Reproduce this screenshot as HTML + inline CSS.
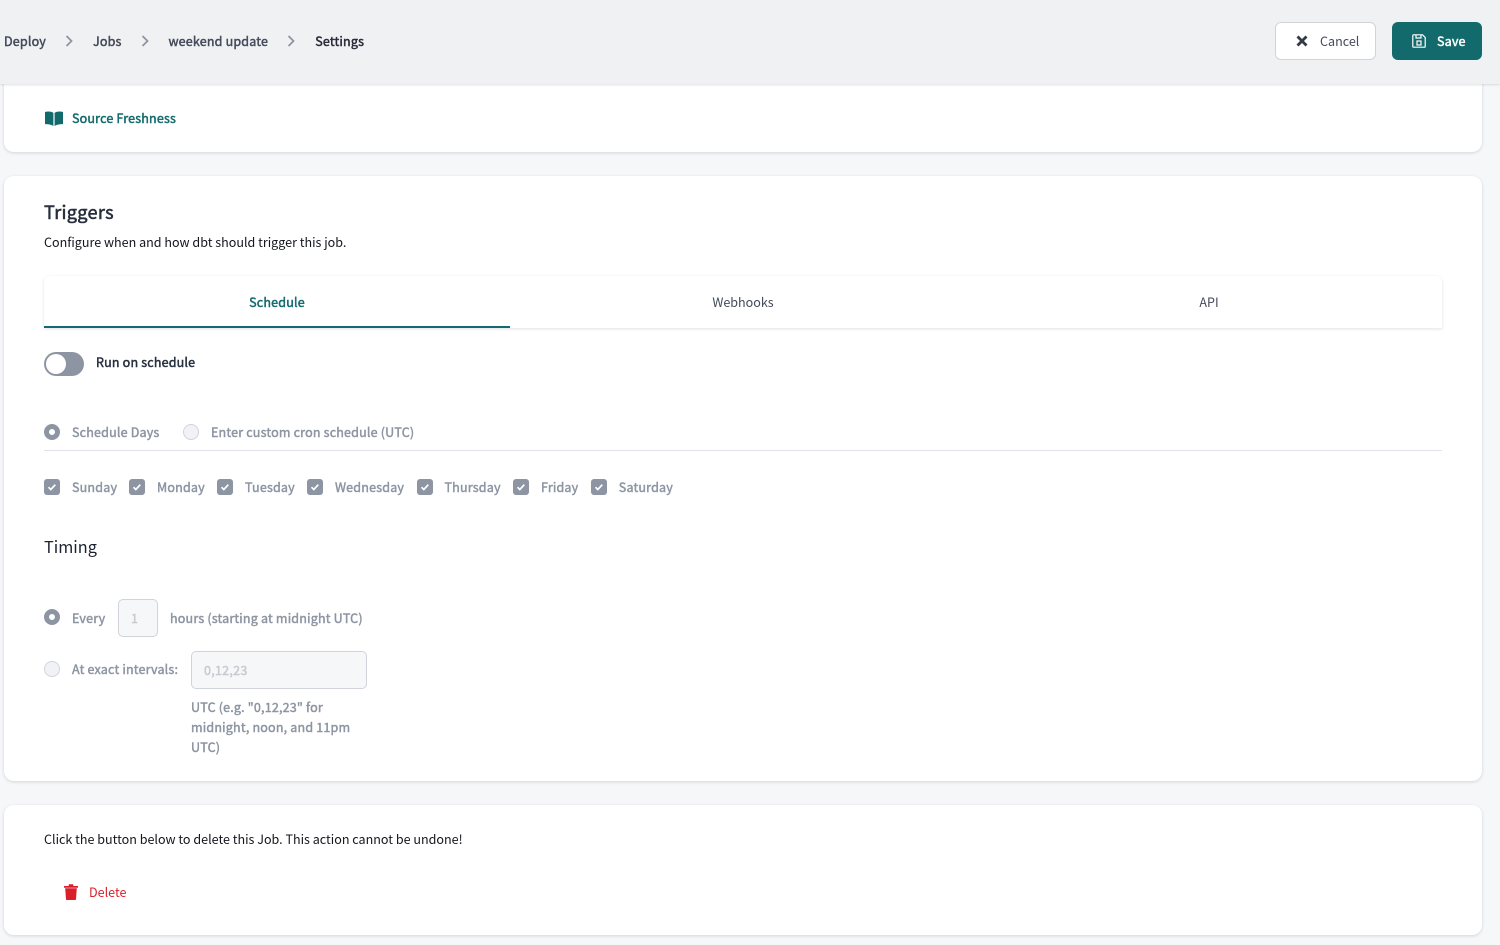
<!DOCTYPE html>
<html><head><meta charset="utf-8">
<style>
html,body{margin:0;padding:0;width:1500px;height:945px;overflow:hidden;background:#f6f7f9;}
body{position:relative;font-family:"Noto Sans CJK JP","Noto Sans CJK SC","Liberation Sans",sans-serif;font-size:12.55px;color:#262a38;}
.t{position:absolute;white-space:nowrap;line-height:20px;height:20px;}
.m{-webkit-text-stroke:.45px currentColor;letter-spacing:.16px;}
.g{color:#8d95a3;-webkit-text-stroke:.45px #8d95a3;letter-spacing:.17px;}
.card{position:absolute;left:4px;width:1478px;background:#fff;border-radius:10px;box-shadow:0 1px 3px rgba(30,40,60,.16);}
.a{position:absolute;box-sizing:border-box;}
.cb{position:absolute;width:16px;height:16px;top:479px;background:#8d95a3;border-radius:3px;}
.cb svg{display:block;}
.r1{position:absolute;width:16px;height:16px;border-radius:50%;background:#fff;border:5px solid #8d95a3;box-sizing:border-box;}
.r0{position:absolute;width:16px;height:16px;border-radius:50%;background:#f1f2f5;border:1px solid #d0d4da;box-sizing:border-box;}
</style></head><body>
<div class="card" style="top:60px;height:92px;border-radius:0 0 10px 10px"></div>
<div class="card" style="top:176px;height:605px"></div>
<div class="card" style="top:805px;height:130px"></div>

<div class="a" style="left:0;top:0;width:1500px;height:84px;background:#f0f1f3;box-shadow:0 1px 2px rgba(30,40,60,.14)"></div>

<div class="t m" style="left:4px;top:31px;color:#434a5a">Deploy</div>
<svg class="a" style="left:65px;top:35px" width="10" height="12" viewBox="0 0 10 12"><path d="M1.500 1l5 5-5 5" fill="none" stroke="#8d95a3" stroke-width="1.800"/></svg>
<div class="t m" style="left:93px;top:31px;color:#434a5a">Jobs</div>
<svg class="a" style="left:141px;top:35px" width="10" height="12" viewBox="0 0 10 12"><path d="M1.500 1l5 5-5 5" fill="none" stroke="#8d95a3" stroke-width="1.800"/></svg>
<div class="t m" style="left:168.500px;top:31px;color:#434a5a">weekend update</div>
<svg class="a" style="left:287px;top:35px" width="10" height="12" viewBox="0 0 10 12"><path d="M1.500 1l5 5-5 5" fill="none" stroke="#8d95a3" stroke-width="1.800"/></svg>
<div class="t m" style="left:315.300px;top:31px;color:#262a38">Settings</div>

<div class="a" style="left:1275px;top:22px;width:101px;height:38px;background:#fff;border:1px solid #d0d4da;border-radius:6px"></div>
<svg class="a" style="left:1296px;top:35px" width="12" height="12" viewBox="0 0 12 12"><path d="M1.500 1.500l9 9M10.500 1.500l-9 9" stroke="#333947" stroke-width="2.800" fill="none"/></svg>
<div class="t" style="left:1320px;top:31px;color:#434a5a">Cancel</div>
<div class="a" style="left:1392px;top:22px;width:90px;height:38px;background:#126a6c;border-radius:6px"></div>
<svg class="a" style="left:1412px;top:34px" width="14" height="14" viewBox="0 0 14 14" fill="none" stroke="#fff" stroke-width="1.200"><path d="M1.500 .8h9l2.700 2.700v9a.7.7 0 0 1-.7.7h-11a.7.7 0 0 1-.7-.7v-11a.7.7 0 0 1 .7-.7z"/><path d="M4 1v3h5V1"/><rect x="5" y="7" width="4" height="4"/></svg>
<div class="t m" style="left:1437px;top:31px;color:#fff">Save</div>

<svg class="a" style="left:45px;top:110.500px" width="18" height="15" viewBox="0 0 18 15"><path d="M0 1C3 .2 6 .4 8.400 1.800V15C6 13.600 3 13 0 13.200z" fill="#126a6c"/><path d="M9.600 1.800C12 .4 15 .2 18 1v12.200c-3-.2-6 .4-8.400 1.800z" fill="#126a6c"/></svg>
<div class="t m" style="left:72px;top:108px;color:#126a6c">Source Freshness</div>

<div class="t m" style="left:44px;top:202px;font-size:18.100px;color:#262f3e;-webkit-text-stroke:.55px #262f3e;letter-spacing:.3px">Triggers</div>
<div class="t" style="left:44px;top:232px;color:#14161c">Configure when and how dbt should trigger this job.</div>

<div class="a" style="left:44px;top:276px;width:1398px;height:52px;background:#fff;border-radius:6px 6px 0 0;box-shadow:0 1px 3px rgba(30,40,60,.14)"></div>
<div class="a" style="left:44px;top:326px;width:466px;height:2px;background:#126a6c"></div>
<div class="t m" style="left:44px;width:466px;text-align:center;top:292px;color:#126a6c">Schedule</div>
<div class="t" style="left:510px;width:466px;text-align:center;top:292px;color:#434a5a">Webhooks</div>
<div class="t" style="left:976px;width:466px;text-align:center;top:292px;color:#434a5a">API</div>

<div class="a" style="left:44px;top:352px;width:40px;height:24px;background:#8d95a3;border-radius:12px"></div>
<div class="a" style="left:46px;top:354px;width:20px;height:20px;background:#fff;border-radius:50%"></div>
<div class="t m" style="left:96px;top:352px;color:#262f3e">Run on schedule</div>

<div class="r1" style="left:44px;top:424px"></div>
<div class="t g" style="left:72px;top:422px">Schedule Days</div>
<div class="r0" style="left:183px;top:424px"></div>
<div class="t g" style="left:211px;top:422px">Enter custom cron schedule (UTC)</div>
<div class="a" style="left:44px;top:450px;width:1398px;height:1px;background:#e1e3e8"></div>

<div class="cb" style="left:44px"><svg width="16" height="16" viewBox="0 0 16 16"><path d="M4.500 8.200l2.300 2.300 4.500-4.800" fill="none" stroke="#fff" stroke-width="1.700"/></svg></div>
<div class="t g" style="left:72px;top:477px">Sunday</div>
<div class="cb" style="left:129px"><svg width="16" height="16" viewBox="0 0 16 16"><path d="M4.500 8.200l2.300 2.300 4.500-4.800" fill="none" stroke="#fff" stroke-width="1.700"/></svg></div>
<div class="t g" style="left:157px;top:477px">Monday</div>
<div class="cb" style="left:217px"><svg width="16" height="16" viewBox="0 0 16 16"><path d="M4.500 8.200l2.300 2.300 4.500-4.800" fill="none" stroke="#fff" stroke-width="1.700"/></svg></div>
<div class="t g" style="left:245px;top:477px">Tuesday</div>
<div class="cb" style="left:307px"><svg width="16" height="16" viewBox="0 0 16 16"><path d="M4.500 8.200l2.300 2.300 4.500-4.800" fill="none" stroke="#fff" stroke-width="1.700"/></svg></div>
<div class="t g" style="left:335px;top:477px">Wednesday</div>
<div class="cb" style="left:417px"><svg width="16" height="16" viewBox="0 0 16 16"><path d="M4.500 8.200l2.300 2.300 4.500-4.800" fill="none" stroke="#fff" stroke-width="1.700"/></svg></div>
<div class="t g" style="left:444.500px;top:477px">Thursday</div>
<div class="cb" style="left:513px"><svg width="16" height="16" viewBox="0 0 16 16"><path d="M4.500 8.200l2.300 2.300 4.500-4.800" fill="none" stroke="#fff" stroke-width="1.700"/></svg></div>
<div class="t g" style="left:541px;top:477px">Friday</div>
<div class="cb" style="left:591px"><svg width="16" height="16" viewBox="0 0 16 16"><path d="M4.500 8.200l2.300 2.300 4.500-4.800" fill="none" stroke="#fff" stroke-width="1.700"/></svg></div>
<div class="t g" style="left:618.800px;top:477px">Saturday</div>

<div class="t" style="left:44px;top:536px;font-size:16.300px;color:#1d2230">Timing</div>

<div class="r1" style="left:44px;top:609px"></div>
<div class="t g" style="left:72px;top:608px">Every</div>
<div class="a" style="left:118px;top:599px;width:40px;height:38px;background:#f6f7f9;border:1px solid #d0d4da;border-radius:5px"></div>
<div class="t" style="left:131px;top:608px;color:#c6cad1;-webkit-text-stroke:.45px #c6cad1">1</div>
<div class="t g" style="left:170px;top:608px">hours (starting at midnight UTC)</div>

<div class="r0" style="left:44px;top:661px"></div>
<div class="t g" style="left:72px;top:659px">At exact intervals:</div>
<div class="a" style="left:191px;top:651px;width:176px;height:38px;background:#f6f7f9;border:1px solid #d0d4da;border-radius:5px"></div>
<div class="t" style="left:204px;top:660px;color:#c6cad1;-webkit-text-stroke:.45px #c6cad1;letter-spacing:.25px">0,12,23</div>
<div class="t g" style="left:191px;top:697px">UTC (e.g. "0,12,23" for</div>
<div class="t g" style="left:191px;top:717px">midnight, noon, and 11pm</div>
<div class="t g" style="left:191px;top:737px">UTC)</div>

<div class="t" style="left:44px;top:829px;color:#14161c">Click the button below to delete this Job. This action cannot be undone!</div>
<svg class="a" style="left:64px;top:884px" width="14" height="16" viewBox="0 0 14 16"><path d="M0 2h4.500L5 .3h4L9.500 2H14v1.800H0z" fill="#d81f2a"/><path d="M1.200 4.300h11.600l-.8 11a.8.8 0 0 1-.8.700H2.800a.8.8 0 0 1-.8-.7z" fill="#d81f2a"/></svg>
<div class="t" style="left:89px;top:882px;color:#d81f2a">Delete</div>
</body></html>
